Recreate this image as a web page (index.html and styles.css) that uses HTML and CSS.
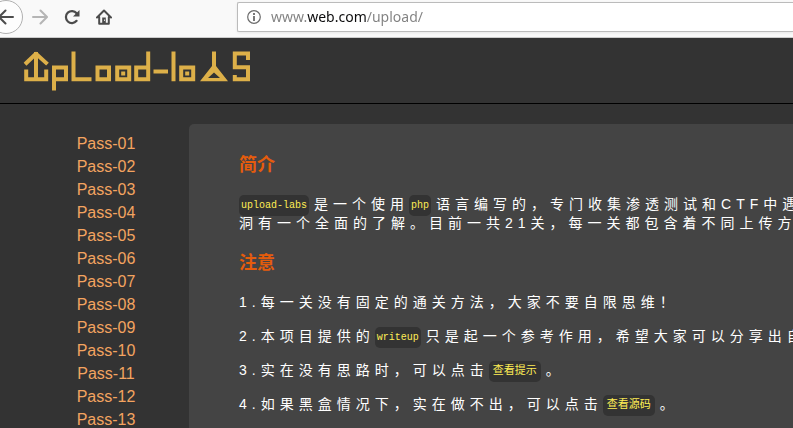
FILE: index.html
```html
<!DOCTYPE html>
<html lang="zh-CN">
<head>
<meta charset="utf-8">
<title>upload-labs</title>
<link rel="stylesheet" href="styles.css">
</head>
<body>
<div class="toolbar">
  <div class="tools">
    <button class="tool back" aria-label="Back"><svg width="36" height="36" viewBox="0 0 36 36"><circle cx="18" cy="18" r="16.5" fill="#fdfdfd" stroke="#b1b1b1"/><path d="M25 18H11.500M17.500 11.500L11 18l6.500 6.500" fill="none" stroke="#4c4c4c" stroke-width="2" stroke-linecap="round" stroke-linejoin="round"/></svg></button>
    <button class="tool" aria-label="Forward"><svg width="16" height="16" viewBox="0 0 16 16"><path d="M1 8h13.500M8.500 1.500L15 8l-6.500 6.500" fill="none" stroke="#b5b5b5" stroke-width="2" stroke-linecap="round" stroke-linejoin="round"/></svg></button>
    <button class="tool" aria-label="Reload"><svg width="16" height="16" viewBox="0 0 16 16"><path d="M12.600 4.300A6 6 0 1 0 12.600 11.800" fill="none" stroke="#4c4c4c" stroke-width="2.200" stroke-linecap="round"/><path d="M15.500 1v6.500H9z" fill="#4c4c4c"/></svg></button>
    <button class="tool" aria-label="Home"><svg width="16" height="16" viewBox="0 0 16 16"><path d="M1 8.500L8 1.500l7 7M3.200 8v6.800h9.600V8" fill="none" stroke="#4c4c4c" stroke-width="2" stroke-linecap="round" stroke-linejoin="round"/><path d="M6.200 14V8.500h3.600V14z" fill="#4c4c4c"/><path d="M8.500 10.500v1.500" stroke="#ddd"/></svg></button>
  </div>
  <div class="address">
    <svg width="14" height="14" viewBox="0 0 14 14"><circle cx="7" cy="7" r="6.300" fill="none" stroke="#6b6b6b" stroke-width="1.200"/><path d="M7 6v5M7 3v2" stroke="#6b6b6b" stroke-width="1.800"/></svg>
    <input class="url" type="text" aria-label="Address" value="www.web.com/upload/">
  </div>
</div>
<header class="header">
  <a href="#" class="logo" aria-label="upload-labs"><svg width="230" height="42" viewBox="22 50 230 42" fill="none" stroke="#ddb049" stroke-width="4">
    <path d="M36 54v25M26.500 62.800L36 53.800l10 9" stroke-linecap="square" stroke-linejoin="round"/>
    <path d="M26.200 69.500v9.800h20v-9.800"/>
    <path d="M54 90.500V67.500h12v11.800H54"/>
    <path d="M73.500 51.500v27.800H91.500"/>
    <path d="M97.500 67.500h11.500v11.800H97.500zM117.200 67.500h12v11.800h-12zM148.200 51.500v27.800h-12v-11.800h12M153.500 71.500h14.500M173.500 51.500v29.800M181.200 67.500h12v11.800h-12z"/>
    <path d="M121.200 71.500h4v4h-4zM185.200 71.500h4v4h-4z" fill="#ddb049" stroke="none"/>
    <path d="M214 51.500V69"/>
    <path d="M212 66h4l12 15.300h-28zM214 72.500l-6 5.500h12z" fill="#ddb049" fill-rule="evenodd" stroke="none"/>
    <path d="M248 60v-6.500h-13.200v13.700H248v12.100h-13.200V75"/>
  </svg></a>
</header>
<main class="main">
  <nav>
    <ul class="menu">
      <li><a href="#">Pass-01</a></li>
      <li><a href="#">Pass-02</a></li>
      <li><a href="#">Pass-03</a></li>
      <li><a href="#">Pass-04</a></li>
      <li><a href="#">Pass-05</a></li>
      <li><a href="#">Pass-06</a></li>
      <li><a href="#">Pass-07</a></li>
      <li><a href="#">Pass-08</a></li>
      <li><a href="#">Pass-09</a></li>
      <li><a href="#">Pass-10</a></li>
      <li><a href="#">Pass-11</a></li>
      <li><a href="#">Pass-12</a></li>
      <li><a href="#">Pass-13</a></li>
    </ul>
  </nav>
  <article class="panel">
    <h3>简介</h3>
    <p><code>upload-labs</code>是一个使用<code>php</code>语言编写的，专门收集渗透测试和CTF中遇<br>洞有一个全面的了解。目前一共21关，每一关都包含着不同上传方</p>
    <h3>注意</h3>
    <p>1.每一关没有固定的通关方法，大家不要自限思维！</p>
    <p>2.本项目提供的<code>writeup</code>只是起一个参考作用，希望大家可以分享出自</p>
    <p>3.实在没有思路时，可以点击<code class="zh">查看提示</code>。</p>
    <p>4.如果黑盒情况下，实在做不出，可以点击<code class="zh">查看源码</code>。</p>
  </article>
</main>
</body>
</html>
```
FILE: styles.css
```css
* { box-sizing: border-box; }

body {
  margin: 0;
  height: 100vh;
  display: flex;
  flex-direction: column;
  overflow: hidden;
  background: #333;
  color: #fff;
  font-family: "Liberation Sans", "Noto Sans CJK SC", sans-serif;
}

/* Browser toolbar */
.toolbar {
  flex: none;
  height: 38px;
  display: grid;
  grid-template-columns: 237px 1fr;
  background: #f9f9f9;
  border-bottom: 1px solid #ccc;
  overflow: hidden;
}

.tools {
  display: flex;
  align-items: center;
  gap: 16px;
  height: 34px;
}

.tool {
  display: block;
  flex: none;
  padding: 0;
  border: 0;
  background: none;
}

.tool svg { display: block; }

.back {
  margin-left: -12px;
  margin-right: -8px;
}

.address {
  display: flex;
  align-items: center;
  gap: 10px;
  height: 30px;
  margin-top: 2px;
  padding-left: 9px;
  background: #fff;
  border: 1px solid #bbb;
  border-right: 0;
  border-radius: 2px 0 0 2px;
  box-shadow: 0 1px 3px rgba(0, 0, 0, 0.08);
}

.url {
  flex: 1;
  min-width: 0;
  padding: 0;
  border: 0;
  outline: 0;
  font: 14px/22px "Noto Sans", sans-serif;
  color: transparent;
  background: linear-gradient(90deg, #808080 36px, #0c0c0d 36px, #0c0c0d 95px, #808080 95px);
  -webkit-background-clip: text;
  background-clip: text;
}

/* Page header */
.header {
  flex: none;
  padding: 12px 22px 11px;
  border-bottom: 1px solid #000;
}

.logo,
.logo svg { display: block; }

/* Page body */
.main {
  flex: 1;
  min-height: 0;
  display: grid;
  grid-template-columns: 189px 1fr;
  padding-top: 20px;
}

.menu {
  margin: 0;
  padding: 8px 0 0 23px;
  list-style: none;
  text-align: center;
  font-size: 16px;
  line-height: 23px;
}

.menu a {
  color: #f4a460;
  text-decoration: none;
}

.panel {
  min-width: 0;
  overflow: hidden;
  padding: 29px 0 0 50px;
  background: #444;
  border-radius: 5px 0 0 0;
  white-space: nowrap;
}

h3 {
  margin: 18px 0;
  font-size: 18px;
  line-height: 24px;
  color: #e65c0c;
}

h3:first-child { margin-top: 0; }

p {
  margin: 0 0 15px;
  font-size: 14px;
  line-height: 19px;
  letter-spacing: 5px;
}

code {
  display: inline-block;
  height: 21px;
  margin: -2px 5px -2px 0;
  padding: 0 2px;
  border-radius: 5px;
  background: #333;
  color: #ffee55;
  font: 10px/21px "Liberation Mono", "Noto Sans CJK SC", monospace;
  letter-spacing: normal;
  vertical-align: middle;
}

.zh {
  padding: 0 4px;
  font-size: 11px;
}
```
